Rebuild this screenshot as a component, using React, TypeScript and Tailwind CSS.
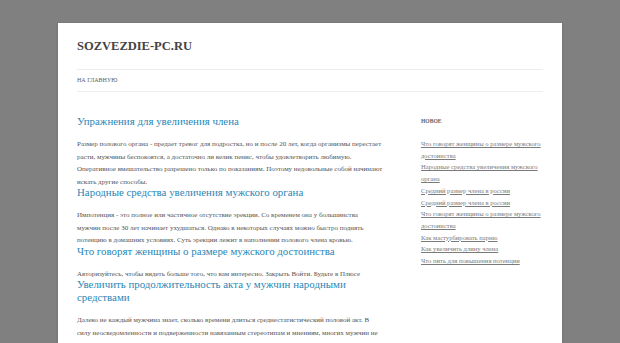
// App.tsx — blog page mock (twenty-twelve style, no web fonts)

// excerpts keep the line breaks seen on the page
const posts = [
  {
    title: 'Упражнения для увеличения члена',
    text: 'Размер полового органа - предает тревог для подростка, но и после 20 лет, когда организмы перестает\nрасти, мужчины беспокоятся, а достаточно ли велик пенис, чтобы удовлетворить любимую.\nОперативное вмешательство разрешено только по показаниям. Поэтому недовольные собой начинают\nискать другие способы.',
  },
  {
    title: 'Народные средства увеличения мужского органа',
    text: 'Импотенция - это полное или частичное отсутствие эрекции. Со временем она у большинства\nмужчин после 30 лет начинает ухудшаться. Однако в некоторых случаях можно быстро поднять\nпотенцию в домашних условиях. Суть эрекции лежит в наполнении полового члена кровью.',
  },
  {
    title: 'Что говорят женщины о размере мужского достоинства',
    text: 'Авторизуйтесь, чтобы видеть больше того, что вам интересно. Закрыть Войти. Будьте в Плюсе',
  },
  {
    title: 'Увеличить продолжительность акта у мужчин народными средствами',
    text: 'Далеко не каждый мужчина знает, сколько времени длиться среднестатистический половой акт. В\nсилу неосведомленности и подверженности навязанным стереотипам и мнениям, многих мужчин не\nустраивает продолжительность полового акта.',
  },
]

const recent = [
  'Что говорят женщины о размере мужского достоинства',
  'Народные средства увеличения мужского органа',
  'Средний размер члена в россии',
  'Средний размер члена в россии',
  'Что говорят женщины о размере мужского достоинства',
  'Как мастурбировать парню',
  'Как увеличить длину члена',
  'Что пить для повышения потенции',
]

export default function App() {
  return (
    <div className="h-[343px] overflow-hidden bg-[#808080] pt-[23px] font-['Liberation_Serif','Times_New_Roman',serif]">
      <div className="mx-auto w-[504px] min-h-[330px] bg-white px-[19px] shadow-[0_1px_3px_rgba(64,64,64,0.3)]">
        {/* Header */}
        <header className="pt-[16px]">
          <h1 className="text-[12.5px] font-bold leading-[15px] text-[#444]">SOZVEZDIE-PC.RU</h1>
          <nav className="mt-[15px] border-y border-[#ededed] h-[23px] flex items-center">
            <a className="text-[6px] uppercase text-[#5e5e5e]">На главную</a>
          </nav>
        </header>

        <div className="flex justify-between pt-[23px]">
          {/* Posts */}
          <main className="w-[306px]">
            {posts.map((p, i) => (
              <article key={i} className="-mt-[2px] first:mt-0">
                <h2 className="w-[303px] text-[10.9px] leading-[13px] text-[#2a87b6]">{p.title}</h2>
                <p className="mt-[10px] whitespace-pre-line text-[7px] leading-[12.5px] text-[#555]">{p.text}</p>
              </article>
            ))}
          </main>

          {/* Sidebar */}
          <aside className="w-[122px]">
            <h3 className="text-[5.6px] font-bold uppercase leading-[12px] text-[#636363]">Новое</h3>
            <ul className="mt-[11px]">
              {recent.map((r, i) => (
                <li key={i} className="text-[6.6px] leading-[11.7px]">
                  <a className="text-[#7a7a7a] underline">{r}</a>
                </li>
              ))}
            </ul>
          </aside>
        </div>
      </div>
    </div>
  )
}
